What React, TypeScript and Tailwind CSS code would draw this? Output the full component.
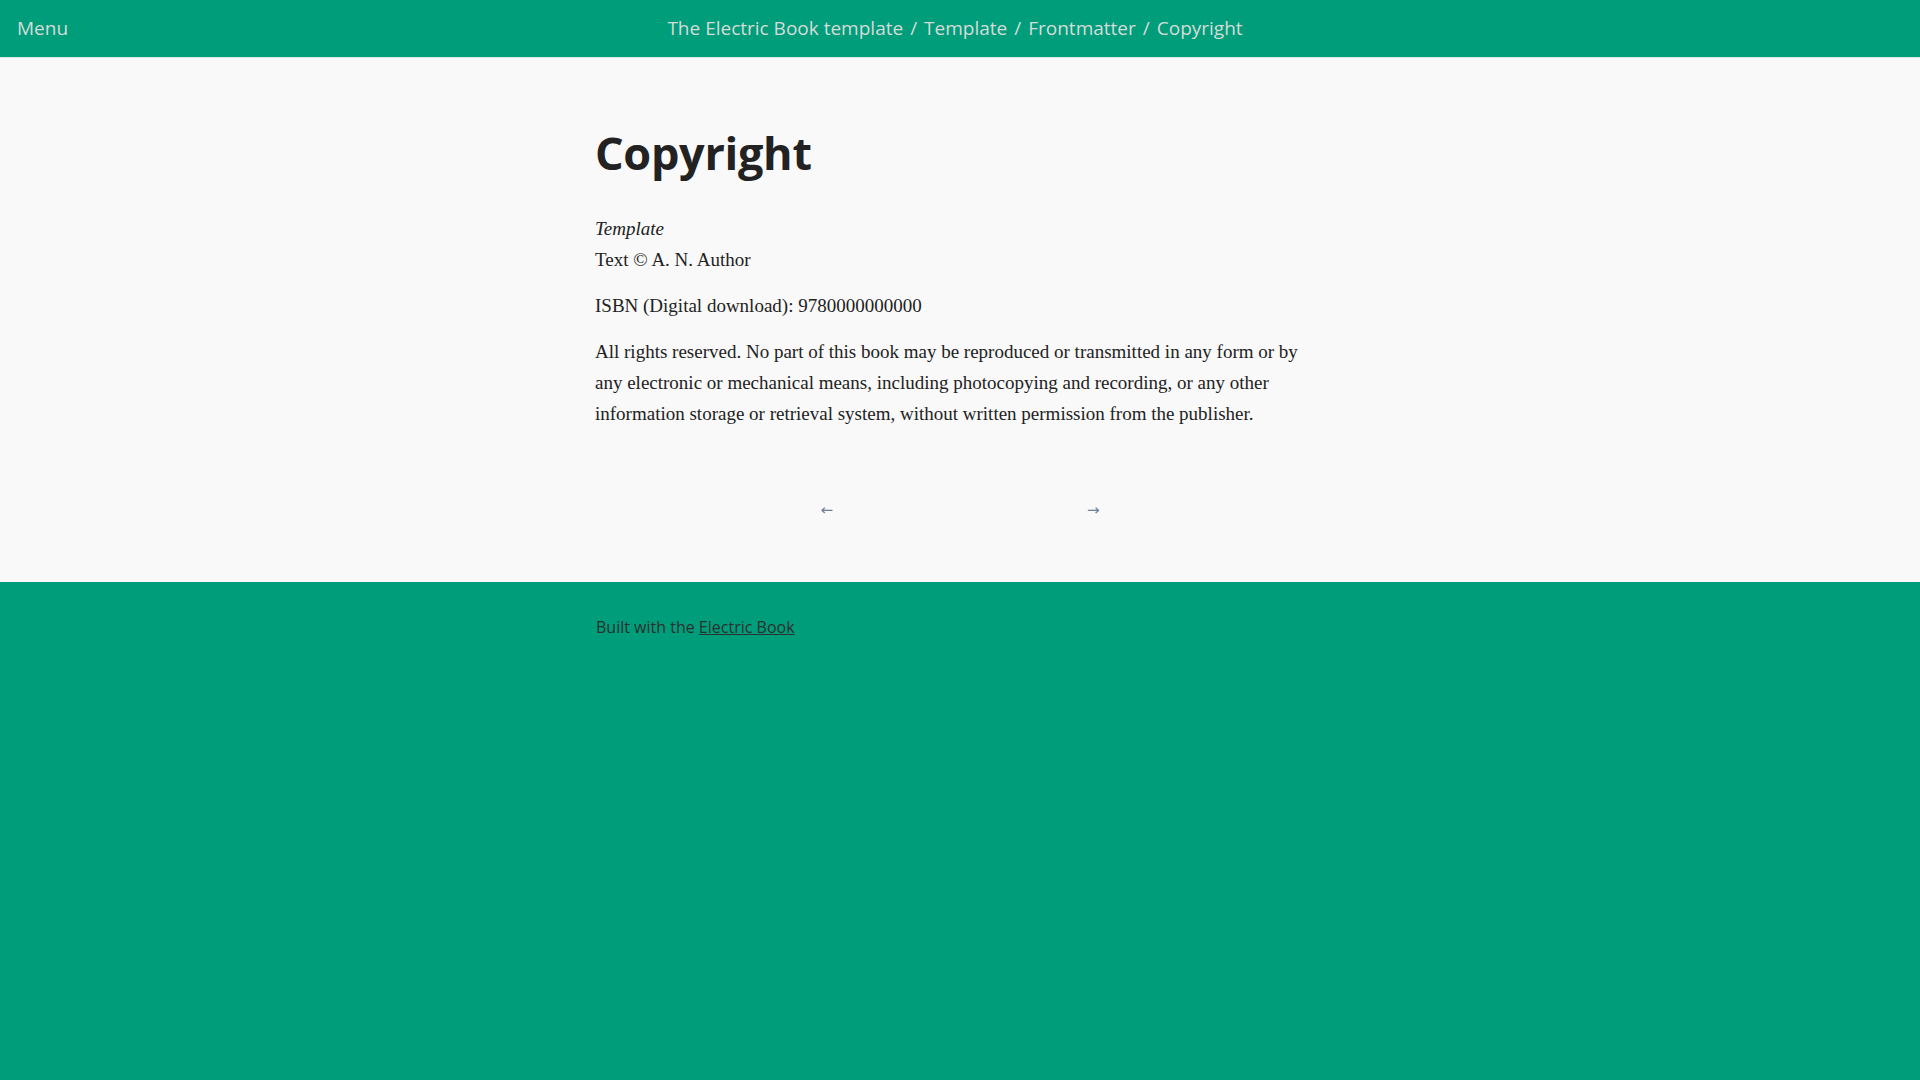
import React from 'react';

const sans = "font-['Open_Sans','Noto_Sans',sans-serif]";
const serif = "font-['Liberation_Serif','Times_New_Roman',serif]";

const crumbs = ['The Electric Book template', 'Template', 'Frontmatter', 'Copyright'];

const Header: React.FC = () => (
  <header className={`relative h-[58px] bg-[#009d7b] border-b border-[#d7e9e4] ${sans} text-[19px] text-[#d6dbd8]`}>
    <div className="flex h-full items-center px-[17px]">
      <a className="cursor-pointer">Menu</a>
      <nav className="absolute left-0 right-0 top-0 flex h-full items-center justify-center pr-[10px] pointer-events-none">
        {crumbs.map((c, i) => (
          <span key={c} className="flex items-center">
            {i > 0 && <span className="px-[7px]">/</span>}
            <a className="pointer-events-auto">{c}</a>
          </span>
        ))}
      </nav>
    </div>
  </header>
);

const App: React.FC = () => {
  return (
    <div className="min-h-screen flex flex-col bg-[#009d7b]">
      <Header />
      <main className="bg-[#f9f9f9]">
        <div className="mx-auto w-[730px] pt-[66px] pb-[60px]">
          <h1 className={`${sans} text-[45px] font-bold leading-[58px] text-[#222] tracking-[-0.3px]`}>Copyright</h1>
          <div className={`${serif} text-[19px] leading-[31px] text-[#222] mt-[31px]`}>
            <p>
              <em>Template</em>
              <br />
              Text © A. N. Author
            </p>
            <p className="mt-[15px]">ISBN (Digital download): 9780000000000</p>
            <p className="mt-[15px] w-[720px]">
              All rights reserved. No part of this book may be reproduced or transmitted in any form or by any
              electronic or mechanical means, including photocopying and recording, or any other information storage
              or retrieval system, without written permission from the publisher.
            </p>
          </div>
          <nav className="mt-[69px] flex justify-center gap-[254px] text-[#6f7f9c] text-[15px] leading-[24px] font-['DejaVu_Sans',sans-serif]">
            <a className="cursor-pointer">←</a>
            <a className="cursor-pointer">→</a>
          </nav>
        </div>
      </main>
      <footer className={`flex-1 bg-[#009d7b] ${sans} text-[16px] text-[#2b2f2d]`}>
        <div className="mx-auto w-[730px] pl-[1px] pt-[33px]">
          Built with the <a className="underline cursor-pointer">Electric Book</a>
        </div>
      </footer>
    </div>
  );
};

export default App;
